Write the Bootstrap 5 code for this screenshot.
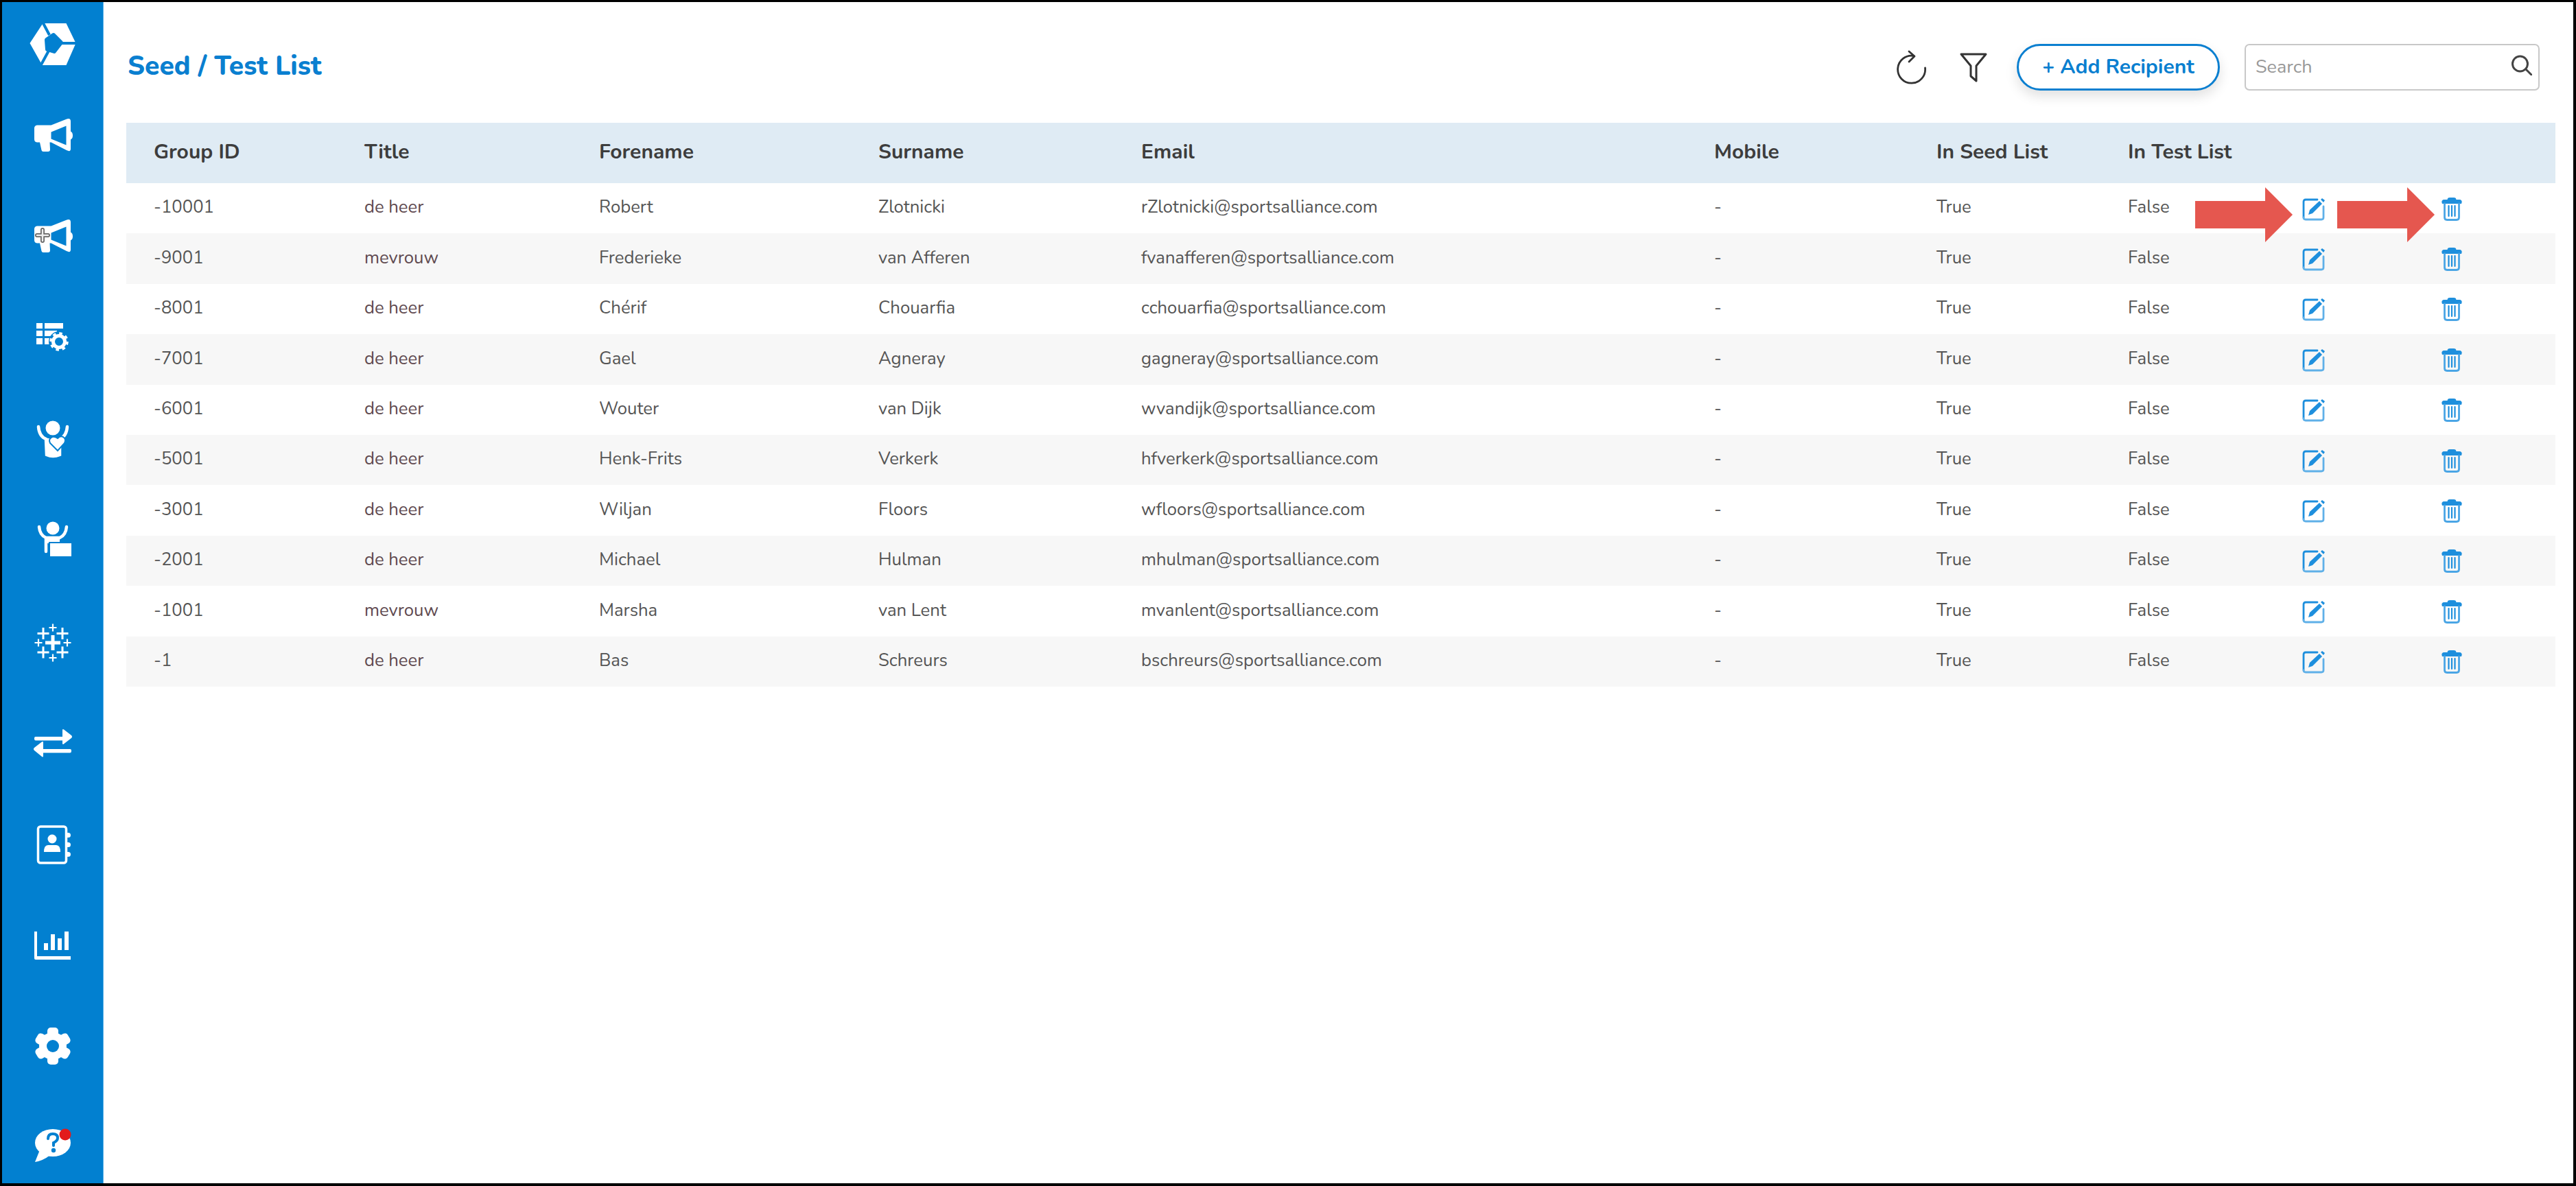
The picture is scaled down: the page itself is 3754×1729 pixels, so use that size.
<!DOCTYPE html>
<html lang="en">
<head>
<meta charset="utf-8">
<title>Seed / Test List</title>
<link href="https://cdn.jsdelivr.net/npm/bootstrap@5.3.0/dist/css/bootstrap.min.css" rel="stylesheet">
<style>
html,body{height:100%;margin:0;background:#000;}
body{font-family:"Nunito","Lato","Open Sans",sans-serif;color:#555;}
.frame{height:1729px;border:solid #000;border-width:3px 4px 4px 3px;background:#fff;overflow:hidden;}
.rail{width:148px;flex:none;background:#0280d0;border-right:1px solid #5db3ea;padding-top:21px;}
.rail-logo{height:80px;margin-bottom:52.5px;}
.rail-stack{gap:67.4px;}
.rail-item{height:80px;}
.rail svg{width:80px;height:80px;display:block;}
.workspace{min-width:0;padding:0 24px 0 33px;position:relative;}
.topbar{height:176px;padding:13px 25px 0 0;}
.page-title{font-size:39px;font-weight:800;color:#0a7fd0;margin:0 0 0 2px;}
.tool-icon{display:block;color:#333;}
.add-btn{width:296px;height:68px;border:3px solid #0a7fd0;border-radius:34px;background:#fff;color:#0a7fd0;font-size:30px;font-weight:700;box-shadow:0 8px 18px rgba(0,0,0,.12);padding:0;}
.search-field{width:430px;height:68px;}
.search-field input{height:68px;font-size:27px;border:2px solid #c8c8c8;border-radius:7px;padding:0 50px 0 14px;font-family:inherit;}
.search-field input::placeholder{color:#999;}
.search-field svg{position:absolute;right:11px;top:16px;}
.seed-table{table-layout:fixed;width:3540px;margin:0;font-size:25.7px;color:#555;}
.seed-table th{height:88px;background:#dfebf4;color:#3d3d3d;font-size:30px;font-weight:700;padding:0 0 4px 40px;border:0;vertical-align:middle;box-shadow:none;}
.seed-table td{height:73.4px;padding:0 0 2px 40px;border:0;vertical-align:middle;color:#555;box-shadow:none;background:#fff;}
.seed-table tbody tr:nth-child(even) td{background:#f7f7f7;}
.seed-table td.act{padding:2px 0 0;}
.seed-table td.act-last{padding:2px 61px 0 0;}
.seed-table td.title-cell{color:#604a50;}
.act svg,.act-last svg{display:block;margin:0 auto;}
.call-out{position:absolute;top:270px;width:142px;height:80px;}
.call-out.one{left:3048px;}
.call-out.two{left:3255px;}
</style>
</head>
<body>
<div class="frame d-flex">
  <nav class="rail d-flex flex-column align-items-center">
    <div class="rail-logo">
      <svg viewBox="0 0 80 80"><path fill="#fff" d="M25.500 10H59.500L73.500 39 59.500 71H24.500L6.500 39Z"/><g stroke="#0280d0" stroke-width="4" fill="#0280d0"><path d="M25 8 35 27M22 72 34 50M40 39H76" fill="none"/><path d="M31 34 41 27 52 38 42 51 32 48Z" stroke-linejoin="round" stroke-width="6"/></g></svg>
    </div>
    <div class="rail-stack d-flex flex-column">
      <div class="rail-item"><svg viewBox="0 0 80 80"><path fill="#fff" fill-rule="evenodd" d="M17 25.500H37.500L59 17Q66 14 66 20V34.500Q69 36 69 40.500T66 46.500V60Q66 65 60 62L37.500 50.500H35.500L36 61Q36 64 33 64H26Q24 64 23.500 62L21 50.500H17Q13 50 13 46V30Q13 26 17 25.500ZM37.500 35.500V45.500L59.500 54.500V26.500Z"/></svg></div>
      <div class="rail-item"><svg viewBox="0 0 80 80"><path fill="#fff" fill-rule="evenodd" d="M17 25.500H37.500L59 17Q66 14 66 20V34.500Q69 36 69 40.500T66 46.500V60Q66 65 60 62L37.500 50.500H35.500L36 61Q36 64 33 64H26Q24 64 23.500 62L21 50.500H17Q13 50 13 46V30Q13 26 17 25.500ZM37.500 35.500V45.500L59.500 54.500V26.500Z"/><path d="M25 31V47M17 39H33" stroke="#666" stroke-width="6" stroke-linecap="round"/><path d="M25 31V47M17 39H33" stroke="#eee" stroke-width="2.500" stroke-linecap="round"/></svg></div>
      <div class="rail-item"><svg viewBox="0 0 80 80" fill="#fff"><path d="M16 20H25V28H16ZM16 31H25V39H16ZM16 42H25V51H16ZM28 20H55V28H28ZM28 31H46V39H28ZM28 42H38V51H28Z"/><circle cx="49" cy="47" r="15" fill="#0280d0"/><circle cx="49" cy="47" r="8.500" fill="none" stroke="#fff" stroke-width="5"/><circle cx="49" cy="47" r="12" fill="none" stroke="#fff" stroke-width="3.500" stroke-dasharray="4.500 4.900"/></svg></div>
      <div class="rail-item"><svg viewBox="0 0 80 80"><circle cx="40" cy="25" r="10.500" fill="#fff"/><path d="M19 23Q20 37 30 41L31 64Q40 68 50 64L50 41Q60 37 61 23" fill="none" stroke="#fff" stroke-width="4.500" stroke-linecap="round"/><path d="M31 40H50V66Q40 68 31 64Z" fill="#fff"/><path d="M47 58 36 47Q33 41 39 38 43 37 47 40 51 36 55 38 60 41 57 47Z" fill="#fff" stroke="#0280d0" stroke-width="2"/></svg></div>
      <div class="rail-item"><svg viewBox="0 0 80 80"><circle cx="40" cy="24" r="9.500" fill="#fff"/><path d="M20 22Q21 34 30 38V58" fill="none" stroke="#fff" stroke-width="4.500" stroke-linecap="round"/><path d="M60 22Q59 34 50 38H30" fill="none" stroke="#fff" stroke-width="4.500" stroke-linecap="round"/><path d="M31 38H50V46H31Z" fill="#fff"/><rect x="35" y="45" width="33" height="21" fill="#fff" stroke="#0280d0" stroke-width="2"/></svg></div>
      <div class="rail-item"><svg viewBox="0 0 80 80" fill="none" stroke="#fff"><path stroke-width="5" d="M40 33V55M29 44H51"/><path stroke-width="3" d="M26 22V39M17.500 30.500H34.500M54 22V39M45.500 30.500H62.500M26 49.500V66.500M17.500 58H34.500M54 49.500V66.500M45.500 58H62.500"/><path stroke-width="2.200" d="M40 16.500V27.500M34.500 22H45.500M40 60.500V71.500M34.500 66H45.500M19 38.500V49.500M13.500 44H24.500M61 38.500V49.500M55.500 44H66.500"/></svg></div>
      <div class="rail-item"><svg viewBox="0 0 80 80" fill="#fff"><g transform="translate(0 2)"><path d="M15 31H54V21.500Q54 19 56 20.500L67 29Q69 31 67 33L56 41.500Q54 43 54 40.500V36.500H15Q13 36.500 13 34V33Q13 31 15 31Z"/><path d="M65 49H26V39.500Q26 37 24 38.500L13 47Q11 49 13 51L24 60Q26 61.500 26 59V54.500H65Q67 54.500 67 52V51Q67 49 65 49Z"/></g></svg></div>
      <div class="rail-item"><svg viewBox="0 0 80 80"><g transform="translate(0 2)"><rect x="18.500" y="15" width="41" height="53" rx="3.500" fill="none" stroke="#fff" stroke-width="3.500"/><path d="M60 24h2.500a2.500 2.500 0 0 1 0 7H60ZM60 38h2.500a2.500 2.500 0 0 1 0 7H60ZM60 52h2.500a2.500 2.500 0 0 1 0 7H60Z" fill="#fff"/><circle cx="39" cy="33" r="6.500" fill="#fff"/><path d="M27 52Q27 42 33 42H45Q51 42 51 52Z" fill="#fff"/></g></svg></div>
      <div class="rail-item"><svg viewBox="0 0 80 80" fill="#fff"><path transform="translate(0 2)" d="M13 20H17V56H66V61H15Q13 61 13 59ZM27 37H33V47H27ZM37 24H43V47H37ZM47 30H53V47H47ZM57 20H63V47H57Z"/></svg></div>
      <div class="rail-item"><svg viewBox="0 0 80 80"><g fill="#fff"><circle cx="40" cy="42" r="20"/><rect x="32" y="15" width="16" height="54" rx="5"/><rect x="32" y="15" width="16" height="54" rx="5" transform="rotate(60 40 42)"/><rect x="32" y="15" width="16" height="54" rx="5" transform="rotate(120 40 42)"/></g><circle cx="40" cy="42" r="9" fill="#0280d0"/></svg></div>
      <div class="rail-item position-relative"><svg viewBox="0 0 80 80"><ellipse cx="40" cy="36" rx="26" ry="20" fill="#fff"/><path d="M22 44 14 64Q26 62 36 54Z" fill="#fff"/><path d="M33 30Q33 23 40 23 47 23 47 29 47 33 41 36V40" fill="none" stroke="#0280d0" stroke-width="4" stroke-linecap="round"/><circle cx="41" cy="47" r="3.200" fill="#0280d0"/><circle cx="58" cy="24" r="8.500" fill="#e21b1b"/></svg></div>
    </div>
  </nav>
  <main class="workspace flex-grow-1">
    <header class="topbar d-flex align-items-center">
      <h1 class="page-title flex-grow-1">Seed / Test List</h1>
      <div class="d-flex align-items-center">
        <svg class="tool-icon" width="46" height="50" viewBox="0 0 46 50" fill="none" stroke="currentColor" stroke-width="2.800" stroke-linecap="round" stroke-linejoin="round"><path d="M42.500 26A20 20 0 1 1 26 8.500"/><path d="M19 2 27 9 19 17"/></svg>
        <svg class="tool-icon" width="42" height="44" viewBox="0 0 42 44" fill="none" stroke="currentColor" stroke-width="3" stroke-linejoin="round" style="margin-left:46px"><path d="M3 3H39L25 20V42L17 35V20Z"/></svg>
        <button type="button" class="btn add-btn" style="margin-left:42px">+ Add Recipient</button>
        <div class="search-field position-relative" style="margin-left:36px">
          <input class="form-control" type="text" placeholder="Search">
          <svg width="30" height="30" viewBox="0 0 30 30" fill="none" stroke="#444" stroke-width="3" stroke-linecap="round"><circle cx="12.500" cy="13" r="11"/><path d="M21 21 29 29"/></svg>
        </div>
      </div>
    </header>
    <table class="table seed-table">
      <colgroup>
        <col style="width:307px"><col style="width:342px"><col style="width:407px"><col style="width:383px"><col style="width:835px"><col style="width:324px"><col style="width:279px"><col style="width:200px"><col style="width:222px"><col style="width:241px">
      </colgroup>
      <thead><tr><th>Group ID</th><th>Title</th><th>Forename</th><th>Surname</th><th>Email</th><th>Mobile</th><th>In Seed List</th><th>In Test List</th><th></th><th></th></tr></thead>
      <tbody id="rows"></tbody>
    </table>
    <svg class="call-out one" viewBox="0 0 142 80" aria-hidden="true"><path fill="#e5574f" d="M0 20H102V0L142 40 102 80V60H0Z"/></svg>
    <svg class="call-out two" viewBox="0 0 142 80" aria-hidden="true"><path fill="#e5574f" d="M0 20H102V0L142 40 102 80V60H0Z"/></svg>
  </main>
</div>
<script src="https://cdn.jsdelivr.net/npm/bootstrap@5.3.0/dist/js/bootstrap.bundle.min.js"></script>
<script>
const data=[["-10001","de heer","Robert","Zlotnicki","rZlotnicki@sportsalliance.com"],["-9001","mevrouw","Frederieke","van Afferen","fvanafferen@sportsalliance.com"],["-8001","de heer","Chérif","Chouarfia","cchouarfia@sportsalliance.com"],["-7001","de heer","Gael","Agneray","gagneray@sportsalliance.com"],["-6001","de heer","Wouter","van Dijk","wvandijk@sportsalliance.com"],["-5001","de heer","Henk-Frits","Verkerk","hfverkerk@sportsalliance.com"],["-3001","de heer","Wiljan","Floors","wfloors@sportsalliance.com"],["-2001","de heer","Michael","Hulman","mhulman@sportsalliance.com"],["-1001","mevrouw","Marsha","van Lent","mvanlent@sportsalliance.com"],["-1","de heer","Bas","Schreurs","bschreurs@sportsalliance.com"]];
const edit='<svg width="34" height="34" viewBox="0 0 34 34" fill="none"><path d="M22 3H5Q2 3 2 6V29" stroke="#1e8fdd" stroke-width="2.800" stroke-linecap="round"/><path d="M2 29Q2 32 5 32H28Q31 32 31 29V13" stroke="#5fb0e8" stroke-width="2.800" stroke-linecap="round"/><path d="M9 25 11 18 25 5 29 9 15 23Z" fill="#1e8fdd"/><path d="M27 3 29 1 33 4 31 7Z" fill="#1e8fdd"/></svg>';
const trash='<svg width="30" height="34" viewBox="0 0 30 34" fill="none" stroke="#1e8fdd" stroke-width="2.800" stroke-linecap="round"><path d="M10 5V3Q10 1.500 12 1.500H18Q20 1.500 20 3V5"/><path d="M2 7.500Q1 4.500 4 4.500H26Q29 4.500 28 7.500Z" fill="#1e8fdd"/><path d="M4.500 9V29Q4.500 32.500 8 32.500H22Q25.500 32.500 25.500 29V9" stroke="#4aa5e5"/><path d="M10.500 12V27M15 12V27M19.500 12V27" stroke-width="2.200"/></svg>';
document.getElementById('rows').innerHTML=data.map(r=>`<tr><td>${r[0]}</td><td class="title-cell">${r[1]}</td><td>${r[2]}</td><td>${r[3]}</td><td>${r[4]}</td><td>-</td><td>True</td><td>False</td><td class="act">${edit}</td><td class="act-last">${trash}</td></tr>`).join('');
</script>
</body>
</html>
